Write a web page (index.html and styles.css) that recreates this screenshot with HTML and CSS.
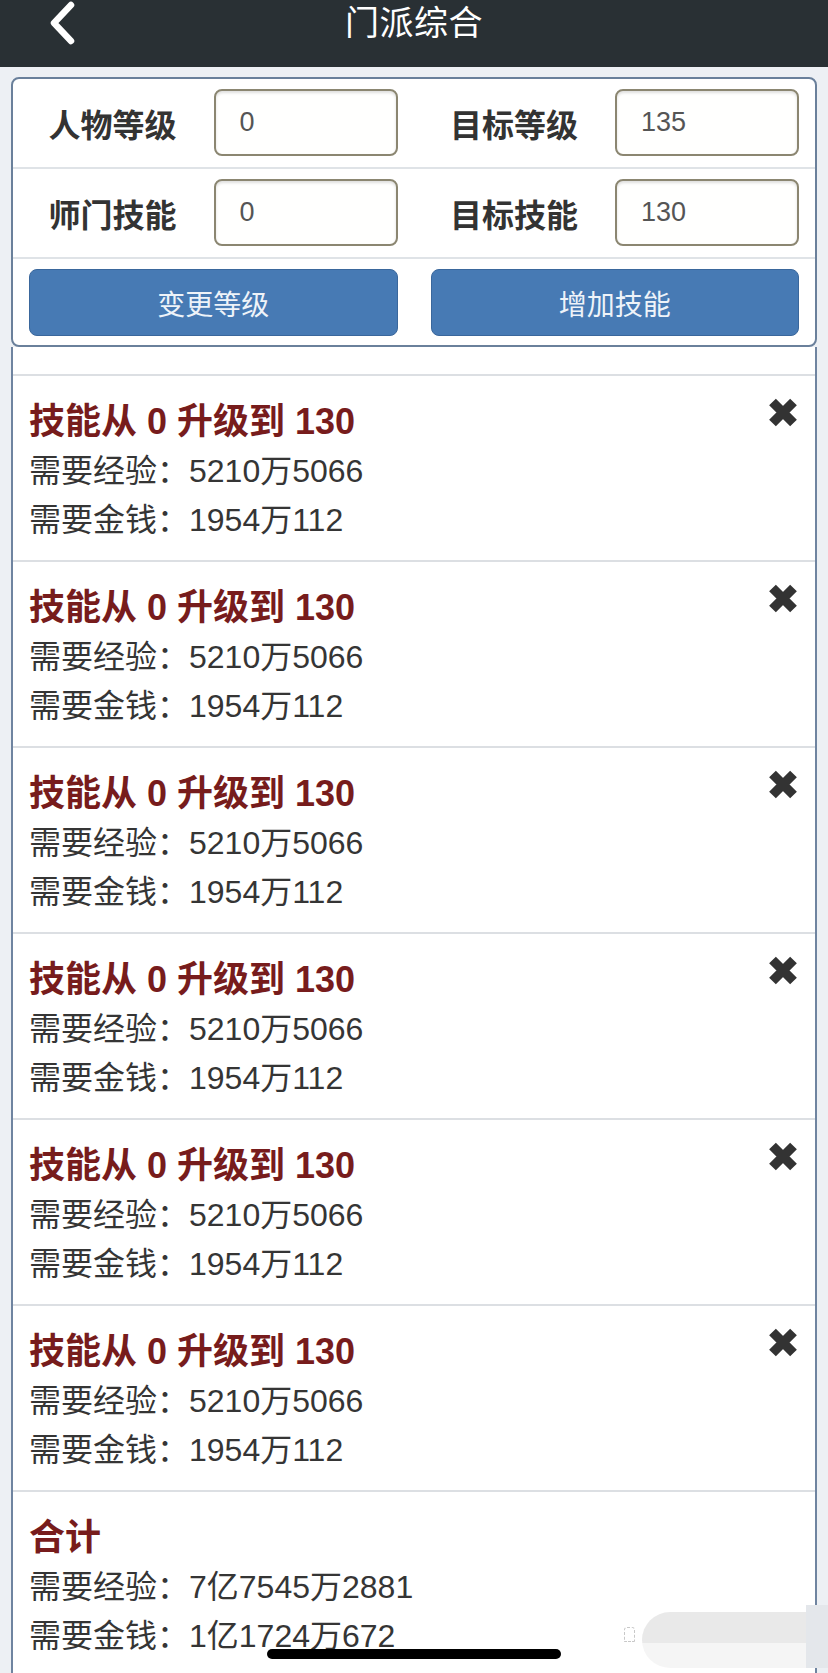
FILE: index.html
```html
<!DOCTYPE html>
<html lang="zh-CN">
<head>
<meta charset="utf-8">
<title>门派综合</title>
<link rel="stylesheet" href="styles.css">
</head>
<body>
<div class="page">
  <header class="topbar">
    <span class="back">
      <svg width="30" height="44" viewBox="0 0 30 44"><polyline points="21,4 4,22 21,40" fill="none" stroke="#ffffff" stroke-width="6.5" stroke-linecap="round" stroke-linejoin="round"/></svg>
    </span>
    <h1 class="title">门派综合</h1>
    <span class="spacer"></span>
  </header>

  <section class="card">
    <div class="form-row">
      <div class="pair"><label class="lbl">人物等级</label><input class="field" type="text" value="0"></div>
      <div class="pair"><label class="lbl">目标等级</label><input class="field" type="text" value="135"></div>
    </div>
    <div class="form-row">
      <div class="pair"><label class="lbl">师门技能</label><input class="field" type="text" value="0"></div>
      <div class="pair"><label class="lbl">目标技能</label><input class="field" type="text" value="130"></div>
    </div>
    <div class="btn-row">
      <button class="btn">变更等级</button>
      <button class="btn">增加技能</button>
    </div>
  </section>

  <section class="list">
    <div class="list-head"></div>

    <div class="item">
      <div class="item-body">
        <div class="item-title">技能从 0 升级到 130</div>
        <div class="item-line">需要经验：5210万5066</div>
        <div class="item-line">需要金钱：1954万112</div>
      </div>
      <span class="close"><svg width="32" height="31" viewBox="0 0 32 31"><path d="M5.5 5 L26.5 26 M26.5 5 L5.5 26" stroke="#333333" stroke-width="9.5" fill="none"/></svg></span>
    </div>

    <div class="item">
      <div class="item-body">
        <div class="item-title">技能从 0 升级到 130</div>
        <div class="item-line">需要经验：5210万5066</div>
        <div class="item-line">需要金钱：1954万112</div>
      </div>
      <span class="close"><svg width="32" height="31" viewBox="0 0 32 31"><path d="M5.5 5 L26.5 26 M26.5 5 L5.5 26" stroke="#333333" stroke-width="9.5" fill="none"/></svg></span>
    </div>

    <div class="item">
      <div class="item-body">
        <div class="item-title">技能从 0 升级到 130</div>
        <div class="item-line">需要经验：5210万5066</div>
        <div class="item-line">需要金钱：1954万112</div>
      </div>
      <span class="close"><svg width="32" height="31" viewBox="0 0 32 31"><path d="M5.5 5 L26.5 26 M26.5 5 L5.5 26" stroke="#333333" stroke-width="9.5" fill="none"/></svg></span>
    </div>

    <div class="item">
      <div class="item-body">
        <div class="item-title">技能从 0 升级到 130</div>
        <div class="item-line">需要经验：5210万5066</div>
        <div class="item-line">需要金钱：1954万112</div>
      </div>
      <span class="close"><svg width="32" height="31" viewBox="0 0 32 31"><path d="M5.5 5 L26.5 26 M26.5 5 L5.5 26" stroke="#333333" stroke-width="9.5" fill="none"/></svg></span>
    </div>

    <div class="item">
      <div class="item-body">
        <div class="item-title">技能从 0 升级到 130</div>
        <div class="item-line">需要经验：5210万5066</div>
        <div class="item-line">需要金钱：1954万112</div>
      </div>
      <span class="close"><svg width="32" height="31" viewBox="0 0 32 31"><path d="M5.5 5 L26.5 26 M26.5 5 L5.5 26" stroke="#333333" stroke-width="9.5" fill="none"/></svg></span>
    </div>

    <div class="item">
      <div class="item-body">
        <div class="item-title">技能从 0 升级到 130</div>
        <div class="item-line">需要经验：5210万5066</div>
        <div class="item-line">需要金钱：1954万112</div>
      </div>
      <span class="close"><svg width="32" height="31" viewBox="0 0 32 31"><path d="M5.5 5 L26.5 26 M26.5 5 L5.5 26" stroke="#333333" stroke-width="9.5" fill="none"/></svg></span>
    </div>

    <div class="item total">
      <div class="item-body">
        <div class="item-title">合计</div>
        <div class="item-line">需要经验：7亿7545万2881</div>
        <div class="item-line">需要金钱：1亿1724万672</div>
      </div>
    </div>
  </section>

  <div class="watermark"></div>
  <div class="watermark-edge"></div>
  <div class="watermark-icon"></div>
  <div class="home-indicator"></div>
</div>
</body>
</html>
```

FILE: styles.css
```css
html, body {
  margin: 0;
  padding: 0;
}

body {
  background: #edf0f4;
  font-family: "Liberation Sans", "Noto Sans CJK SC", sans-serif;
  color: #333333;
}

.page {
  position: relative;
  width: 828px;
  height: 1673px;
  overflow: hidden;
}

/* ---------- top bar ---------- */
.topbar {
  display: grid;
  grid-template-columns: 1fr auto 1fr;
  align-items: start;
  height: 67px;
  background: #293034;
}

.back {
  display: block;
  padding: 1px 0 0 50px;
}

.back svg {
  display: block;
}

.title {
  margin: 0;
  font-size: 34px;
  font-weight: 400;
  line-height: 46px;
  color: #ffffff;
  letter-spacing: 0.5px;
}

/* ---------- form card ---------- */
.card {
  margin: 10px 11px 0;
  border: 2px solid #6a809b;
  border-radius: 8px;
  background: #ffffff;
}

.form-row {
  display: grid;
  grid-template-columns: 1fr 1fr;
  column-gap: 33px;
  padding: 10px 16px 11px;
  border-bottom: 2px solid #dfe3e7;
}

.pair {
  display: grid;
  grid-template-columns: 1fr 184px;
  align-items: center;
}

.lbl {
  text-align: right;
  padding-right: 37px;
  font-size: 32px;
  font-weight: 700;
  color: #333333;
}

.field {
  box-sizing: border-box;
  width: 184px;
  height: 67px;
  margin: 0;
  padding: 0 0 0 24px;
  border: 2px solid #8b8671;
  border-radius: 8px;
  background: #fffffe;
  box-shadow: inset 0 2px 3px rgba(0, 0, 0, 0.13);
  font-family: "Liberation Sans", sans-serif;
  font-size: 27px;
  color: #555555;
  outline: none;
}

.btn-row {
  display: grid;
  grid-template-columns: 1fr 1fr;
  column-gap: 33px;
  padding: 10px 16px 9px;
}

.btn {
  height: 67px;
  margin: 0;
  padding: 0;
  border: 1px solid #3a679c;
  border-radius: 8px;
  background: #477ab4;
  color: #eef3f9;
  font-family: "Liberation Sans", "Noto Sans CJK SC", sans-serif;
  font-size: 28px;
}

/* ---------- list ---------- */
.list {
  margin: 0 11px;
  border-left: 2px solid #6f84a0;
  border-right: 2px solid #6f84a0;
  background: #ffffff;
  min-height: 1400px;
}

.list-head {
  height: 27px;
  border-bottom: 2px solid #dcdfe3;
}

.item {
  display: flex;
  align-items: flex-start;
  padding: 21px 16px 15px 16px;
  border-bottom: 2px solid #dcdfe3;
}

.item.total {
  border-bottom: none;
}

.item-body {
  flex: 1;
}

.item-title {
  font-size: 36px;
  font-weight: 700;
  line-height: 50px;
  color: #771c1c;
}

.item-line {
  font-size: 32px;
  line-height: 49px;
  color: #353535;
}

.close {
  display: block;
  width: 32px;
  height: 31px;
  margin-top: 0;
}

.close svg {
  display: block;
}

/* ---------- overlays ---------- */
.watermark {
  position: absolute;
  left: 642px;
  top: 1612px;
  width: 165px;
  height: 56px;
  border-radius: 28px 0 0 28px;
  background: linear-gradient(#e9e9e9 0, #e9e9e9 55%, #f5f5f5 55%, #f5f5f5 100%);
}

.watermark-edge {
  position: absolute;
  left: 806px;
  top: 1605px;
  width: 22px;
  height: 63px;
  background: #e4e7eb;
}

.watermark-icon {
  position: absolute;
  left: 624px;
  top: 1627px;
  width: 9px;
  height: 13px;
  border: 1px dashed #c8c8c8;
  border-radius: 3px 3px 1px 1px;
}

.home-indicator {
  position: absolute;
  left: 267px;
  top: 1649px;
  width: 294px;
  height: 10px;
  border-radius: 5px;
  background: #000000;
}
```
